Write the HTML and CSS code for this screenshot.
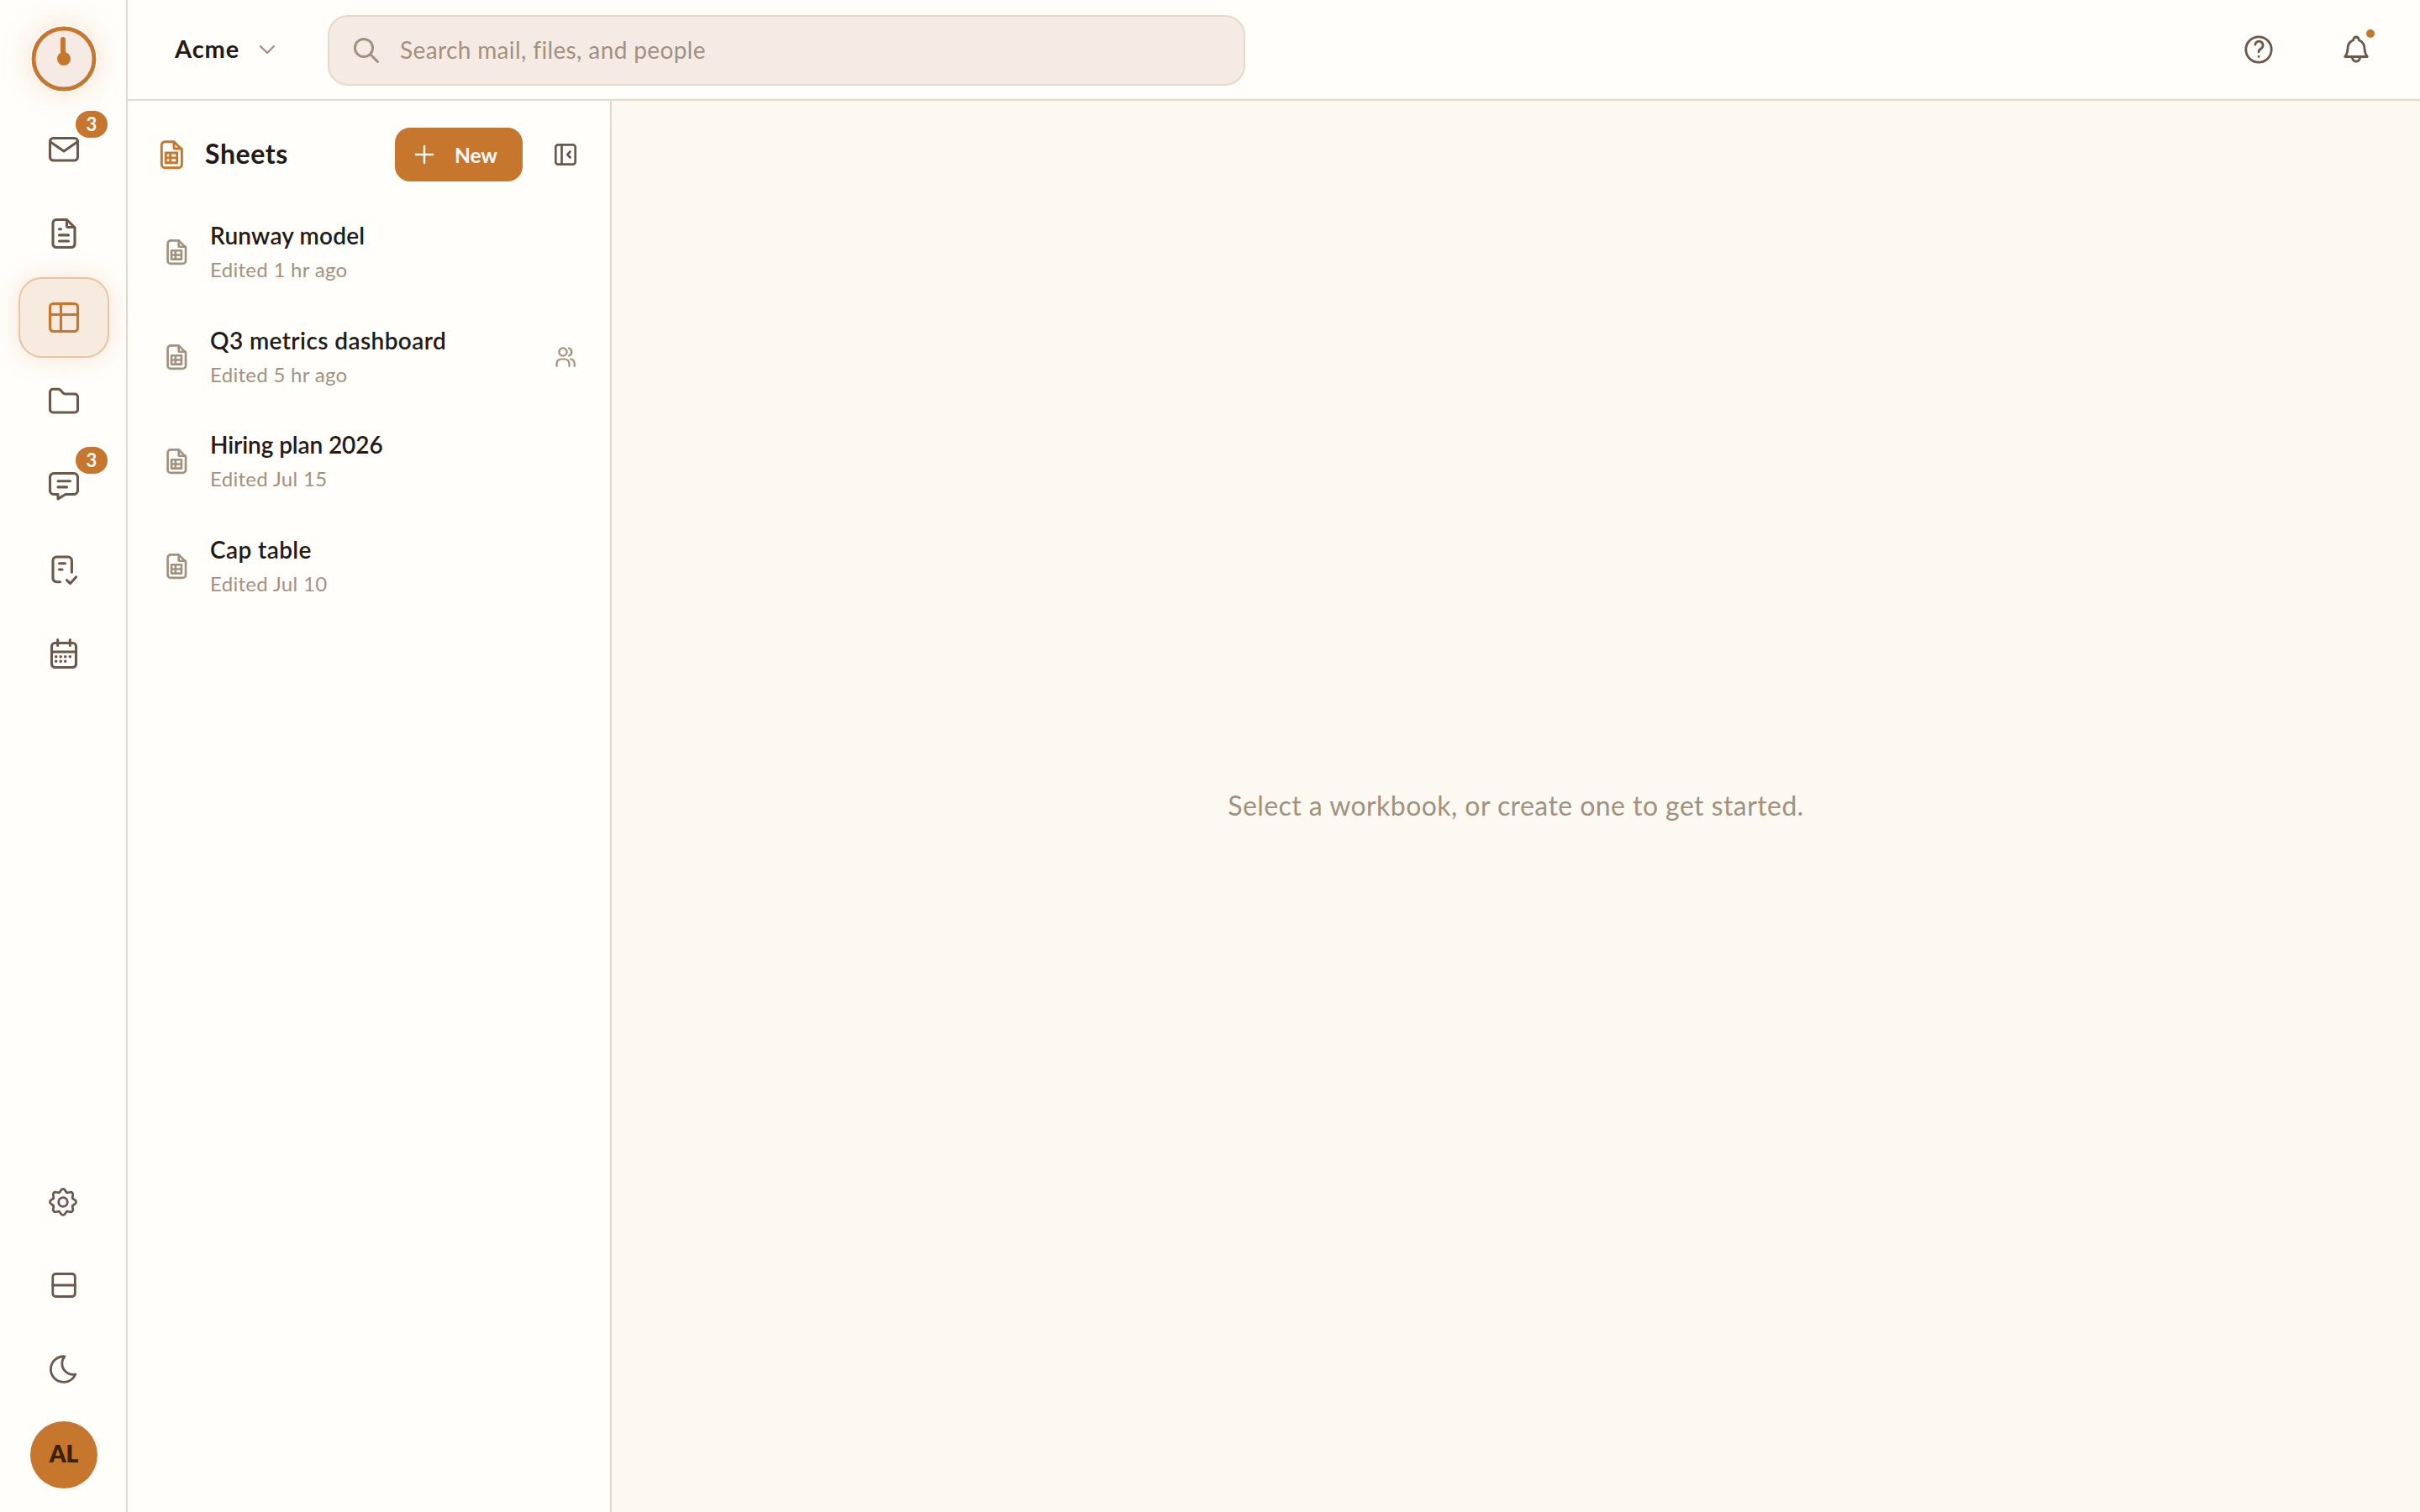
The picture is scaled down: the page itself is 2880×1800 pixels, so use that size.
FILE: index.html
```html
<!DOCTYPE html>
<html lang="en">
<head>
    <meta charset="UTF-8">
    <meta name="viewport" content="width=device-width, initial-scale=1.0">
    <title>Sheets - Acme</title>
    <link rel="stylesheet" href="styles.css">
</head>
<body>
    <!-- Shared icons -->
    <svg class="sprite" aria-hidden="true">
        <symbol id="icon-sheet" viewBox="0 0 36 36">
            <path d="M10.3 2.7H21l9.4 9.3v17.7a4 4 0 0 1-4 4H10.3a4 4 0 0 1-4-4v-23a4 4 0 0 1 4-4z"/>
            <path d="M21 3v6.5a1.5 1.5 0 0 0 1.5 1.5H30"/>
            <path d="M11.3 16h13.4v11.7H11.3zM16.7 16v11.7M11.3 21.9h13.4"/>
        </symbol>
    </svg>

    <div class="app">
        <!-- Navigation rail -->
        <nav class="rail">
            <div class="logo">
                <svg viewBox="0 0 80 80">
                    <circle class="logo-ring" cx="40" cy="40" r="36"/>
                    <path class="logo-hand" d="M39 17v15"/>
                    <circle class="logo-dot" cx="40" cy="40" r="8"/>
                </svg>
            </div>

            <a class="rail-item">
                <svg class="icon" viewBox="0 0 40 40"><rect x="3.5" y="6.5" width="33" height="26.5" rx="4"/><path d="M4 11l16 11 16-11"/></svg>
                <span class="badge">3</span>
            </a>
            <a class="rail-item">
                <svg class="icon" viewBox="0 0 40 40"><path d="M11 3.5h12.5L33 13v19.5a4 4 0 0 1-4 4H11a4 4 0 0 1-4-4v-25a4 4 0 0 1 4-4z"/><path d="M23.5 4v7a1.5 1.5 0 0 0 1.5 1.5h7.5M14.500 14.7h2M14.500 21.9h11M14.500 29h11"/></svg>
            </a>
            <a class="rail-item active">
                <svg class="icon" viewBox="0 0 40 40"><rect x="3.5" y="3.5" width="33" height="33" rx="4"/><path d="M16.5 3.5v33M3.5 16.5h33"/></svg>
            </a>
            <a class="rail-item">
                <svg class="icon" viewBox="0 0 40 40"><path d="M7 5.3h6.5a3 3 0 0 1 2.3 1l3.4 3.7a3 3 0 0 0 2.2 1h11.6a3.5 3.5 0 0 1 3.5 3.5v15a3.5 3.5 0 0 1-3.5 3.5H7a3.5 3.5 0 0 1-3.5-3.5V8.8A3.5 3.5 0 0 1 7 5.3z"/></svg>
            </a>
            <a class="rail-item">
                <svg class="icon" viewBox="0 0 40 40"><path d="M8 5.5h24a4.5 4.5 0 0 1 4.5 4.5v16a4.5 4.5 0 0 1-4.5 4.5H22L13 36v-5.5H8A4.5 4.5 0 0 1 3.5 26V10A4.5 4.5 0 0 1 8 5.5zM13 14.7h14.5M13 21.9h10.5"/></svg>
                <span class="badge">3</span>
            </a>
            <a class="rail-item">
                <svg class="icon" viewBox="0 0 40 40"><path d="M15.5 34.7h-4.3A4.2 4.2 0 0 1 7 30.5V9.2A4.2 4.2 0 0 1 11.2 5h14a4.2 4.2 0 0 1 4.2 4.2v14M14.500 12.7h7M14.500 20h3.5M23.5 32.7l4 4 7-7.7"/></svg>
            </a>
            <a class="rail-item">
                <svg class="icon" viewBox="0 0 40 40"><rect x="5.5" y="7.5" width="29" height="29" rx="4"/><path d="M5.5 18h29M12.7 3.5v7M27.3 3.5v7"/><path class="dots" d="M10.7 23.7h0M16.2 23.7h0M21.7 23.7h0M27.3 23.7h0M10.7 29.3h0M16.2 29.3h0M21.7 29.3h0"/></svg>
            </a>

            <div class="rail-bottom">
                <a class="rail-item">
                    <svg class="icon thin" viewBox="-19 -21 40 40">
                        <g id="teeth">
                            <path id="tooth" d="M-4.7-11.3C-2.7-12.1-3.2-15.6 0-15.6S2.7-12.1 4.7-11.3"/>
                            <use href="#tooth" transform="rotate(45)"/>
                            <use href="#tooth" transform="rotate(90)"/>
                            <use href="#tooth" transform="rotate(135)"/>
                        </g>
                        <use href="#teeth" transform="rotate(180)"/>
                        <circle r="5.3"/>
                    </svg>
                </a>
                <a class="rail-item">
                    <svg class="icon thin" viewBox="0 0 40 40"><rect x="6.8" y="6.5" width="26.5" height="27" rx="3.5"/><path d="M6.8 20h26.5"/></svg>
                </a>
                <a class="rail-item">
                    <svg class="icon thin" viewBox="0 0 40 40"><path d="M21 4.8A15.3 15.3 0 1 0 33.8 26 13 13 0 0 1 21 4.8z"/></svg>
                </a>
                <div class="avatar">AL</div>
            </div>
        </nav>

        <div class="workspace">
            <!-- Top bar -->
            <header class="topbar">
                <button class="org">
                    <span>Acme</span>
                    <svg class="chevron" viewBox="0 0 20 20"><path d="M2 6l8 8 8-8"/></svg>
                </button>
                <div class="search">
                    <svg class="search-icon" viewBox="0 0 32 32"><circle cx="13" cy="13" r="10.6"/><path d="M21 21l8.5 8.5"/></svg>
                    <span>Search mail, files, and people</span>
                </div>
                <div class="actions">
                    <svg class="icon thin" viewBox="0 0 40 40"><circle cx="20" cy="20" r="15.2"/><path d="M15.8 14.2A4.7 4.7 0 1 1 22.7 19c-1.8 1.1-2.6 2-2.6 3.8M20 28.5h.01"/></svg>
                    <div class="bell">
                        <svg class="icon thin" viewBox="0 0 40 40"><path d="M6.8 28.5h26.4c-2.2-2.6-3-5-3.2-9.5 0-5.2-2.6-8.6-6.6-10.3-.4-2.3-1.7-3.7-3.4-3.7s-3 1.4-3.4 3.7C12.6 10.4 10 13.8 10 19c-.2 4.5-1 6.9-3.2 9.5zM15.3 29.5a4.8 5.8 0 0 0 9.4 0"/></svg>
                        <span class="dot"></span>
                    </div>
                </div>
            </header>

            <div class="content">
                <!-- Workbook list -->
                <aside class="panel">
                    <div class="panel-header">
                        <svg class="panel-icon" viewBox="0 0 36 36"><use href="#icon-sheet"/></svg>
                        <h1>Sheets</h1>
                        <button class="new-btn">
                            <svg viewBox="0 0 24 24"><path d="M12 2v20M2 12h20"/></svg>
                            <span>New</span>
                        </button>
                        <svg class="collapse" viewBox="0 0 32 32"><rect x="4.3" y="4.3" width="23.4" height="23.4" rx="3"/><path d="M11.5 4.3v23.4M21.5 12.5L18.3 16l3.2 3.5"/></svg>
                    </div>

                    <ul class="files">
                        <li class="file">
                            <svg class="file-icon" viewBox="0 0 36 36"><use href="#icon-sheet"/></svg>
                            <div class="file-text">
                                <p class="file-name">Runway model</p>
                                <p class="file-date">Edited 1 hr ago</p>
                            </div>
                        </li>
                        <li class="file">
                            <svg class="file-icon" viewBox="0 0 36 36"><use href="#icon-sheet"/></svg>
                            <div class="file-text">
                                <p class="file-name wide">Q3 metrics dashboard</p>
                                <p class="file-date">Edited 5 hr ago</p>
                            </div>
                            <svg class="shared" viewBox="0 0 24 26"><circle cx="9" cy="7" r="4.7"/><path d="M1.5 24v-3a5.5 5.5 0 0 1 5.5-5.5h4a5.5 5.5 0 0 1 5.5 5.5v3M16 2.5a4.7 4.7 0 0 1 0 9M18 15.5c3 .5 4.7 2.5 4.7 5.5v3"/></svg>
                        </li>
                        <li class="file">
                            <svg class="file-icon" viewBox="0 0 36 36"><use href="#icon-sheet"/></svg>
                            <div class="file-text">
                                <p class="file-name tight">Hiring plan 2026</p>
                                <p class="file-date">Edited Jul 15</p>
                            </div>
                        </li>
                        <li class="file">
                            <svg class="file-icon" viewBox="0 0 36 36"><use href="#icon-sheet"/></svg>
                            <div class="file-text">
                                <p class="file-name wide">Cap table</p>
                                <p class="file-date">Edited Jul 10</p>
                            </div>
                        </li>
                    </ul>
                </aside>

                <main class="empty">
                    <p>Select a workbook, or create one to get started.</p>
                </main>
            </div>
        </div>
    </div>
</body>
</html>
```
FILE: styles.css
```css
* {
    box-sizing: border-box;
}
body {
    margin: 0;
    font-family: Lato, "Liberation Sans", sans-serif;
    font-size: 28px;
    color: #231a16;
    background-color: #fffefb;
}
p, h1, ul {
    margin: 0;
    padding: 0;
}
button {
    font: inherit;
    color: inherit;
    border: none;
    background: none;
    padding: 0;
}
svg {
    display: block;
    flex: none;
    fill: none;
    stroke: currentColor;
    stroke-linecap: round;
    stroke-linejoin: round;
}
.sprite {
    display: none;
}
.app {
    display: flex;
    height: 100vh;
}

/* Navigation rail */
.rail {
    display: flex;
    flex-direction: column;
    align-items: center;
    width: 152px;
    padding: 30px 0 28px;
    border-right: 2px solid #e8d8c8;
}
.rail, .rail-bottom {
    gap: 4px;
}
.logo {
    width: 80px;
    height: 80px;
    margin: 0 0 16px 2px;
    border-radius: 50%;
    box-shadow: 0 0 36px rgba(199, 118, 46, 0.22);
}
.logo-ring {
    fill: #f5ebe4;
    stroke: #c7762e;
    stroke-width: 4.8;
}
.logo-hand {
    stroke: #c7762e;
    stroke-width: 6;
}
.logo-dot {
    fill: #c7762e;
    stroke: none;
}
.rail-item {
    position: relative;
    display: flex;
    align-items: center;
    justify-content: center;
    width: 108px;
    height: 96px;
    margin-left: 2px;
    border: 2px solid transparent;
    border-radius: 28px;
    color: #6b574b;
}
.rail-item.active {
    color: #c7762e;
    background-color: #f7eade;
    border-color: #e9c4a3;
    box-shadow: 0 0 32px rgba(199, 118, 46, 0.2);
}
.icon {
    width: 40px;
    height: 40px;
    stroke-width: 3.1;
}
.icon.thin {
    stroke-width: 2.8;
}
.dots {
    stroke-width: 3.6;
}
.badge {
    position: absolute;
    top: 0;
    right: 0;
    width: 38px;
    height: 32px;
    border-radius: 16px;
    background-color: #c7762e;
    color: #fffefb;
    font-size: 22px;
    font-weight: 700;
    line-height: 32px;
    text-align: center;
}
.rail-bottom {
    display: flex;
    flex-direction: column;
    align-items: center;
    margin-top: auto;
}
.avatar {
    width: 80px;
    height: 80px;
    margin: 10px 0 0 2px;
    border-radius: 50%;
    background-color: #c7762e;
    color: #3a2203;
    font-weight: 800;
    line-height: 77px;
    text-align: center;
}

/* Top bar */
.workspace {
    display: flex;
    flex-direction: column;
    flex: 1;
}
.topbar {
    display: flex;
    align-items: center;
    height: 120px;
    padding: 0 56px;
    border-bottom: 2px solid #e8d8c8;
}
.org {
    display: flex;
    align-items: center;
    justify-content: space-between;
    width: 120px;
    font-weight: 700;
    font-size: 29px;
    letter-spacing: 0.9px;
}
.org span, .search span {
    padding-bottom: 3px;
}
.chevron {
    width: 20px;
    height: 20px;
    color: #a3917f;
    stroke-width: 2.4;
}
.search {
    display: flex;
    align-items: center;
    gap: 24px;
    width: 1092px;
    height: 84px;
    margin: 2px 0 0 62px;
    padding: 0 28px;
    border: 2px solid #e8d8c8;
    border-radius: 24px;
    background-color: #f5ebe4;
    color: #a3917f;
    letter-spacing: 0.37px;
}
.search-icon {
    width: 32px;
    height: 32px;
    stroke-width: 3;
}
.actions {
    display: flex;
    gap: 76px;
    margin-left: auto;
    color: #6b574b;
}
.bell {
    position: relative;
}
.dot {
    position: absolute;
    top: -4px;
    right: -2px;
    width: 10px;
    height: 10px;
    border-radius: 50%;
    background-color: #c7762e;
}

/* Workbook list */
.content {
    display: flex;
    flex: 1;
}
.panel {
    width: 576px;
    padding-top: 32px;
    border-right: 2px solid #e8d8c8;
}
.panel-header {
    display: flex;
    align-items: center;
    height: 64px;
    padding: 0 37px 0 34px;
}
.panel-icon {
    width: 36px;
    height: 36px;
    color: #c7762e;
    stroke-width: 2.9;
}
h1 {
    margin-left: 22px;
    padding-bottom: 2px;
    font-size: 32px;
    line-height: 40px;
    letter-spacing: 0.6px;
}
.new-btn {
    display: flex;
    align-items: center;
    justify-content: space-between;
    width: 152px;
    height: 64px;
    margin-left: auto;
    padding: 0 30px 0 23px;
    border-radius: 18px;
    background-color: #c7762e;
    color: #fffefb;
    font-size: 24.5px;
    font-weight: 700;
}
.new-btn svg {
    width: 24px;
    height: 24px;
    stroke-width: 2.4;
}
.collapse {
    width: 32px;
    height: 32px;
    margin-left: 35px;
    color: #6b574b;
    stroke-width: 2.7;
}
.files {
    margin-top: 22px;
    list-style: none;
}
.file {
    display: flex;
    align-items: center;
    height: 124.6px;
    padding: 0 41px 0 42px;
}
.file-icon {
    width: 32px;
    height: 32px;
    color: #a3917f;
    stroke-width: 3;
}
.file-text {
    flex: 1;
    margin-left: 24px;
}
.file-name {
    padding-bottom: 1px;
    font-weight: 600;
    line-height: 40px;
    letter-spacing: 0.2px;
}
.file-name.wide {
    letter-spacing: 0.4px;
}
.file-name.tight {
    letter-spacing: -0.1px;
}
.file-date {
    font-size: 24px;
    line-height: 39px;
    letter-spacing: 0.3px;
    color: #a3917f;
}
.shared {
    width: 24px;
    height: 26px;
    color: #a3917f;
    stroke-width: 2.2;
}

/* Empty state */
.empty {
    display: flex;
    flex: 1;
    align-items: center;
    justify-content: center;
    padding-bottom: 3px;
    background-color: #fcf9f3;
    color: #a3917f;
    font-size: 32px;
    letter-spacing: 0.43px;
}
```
